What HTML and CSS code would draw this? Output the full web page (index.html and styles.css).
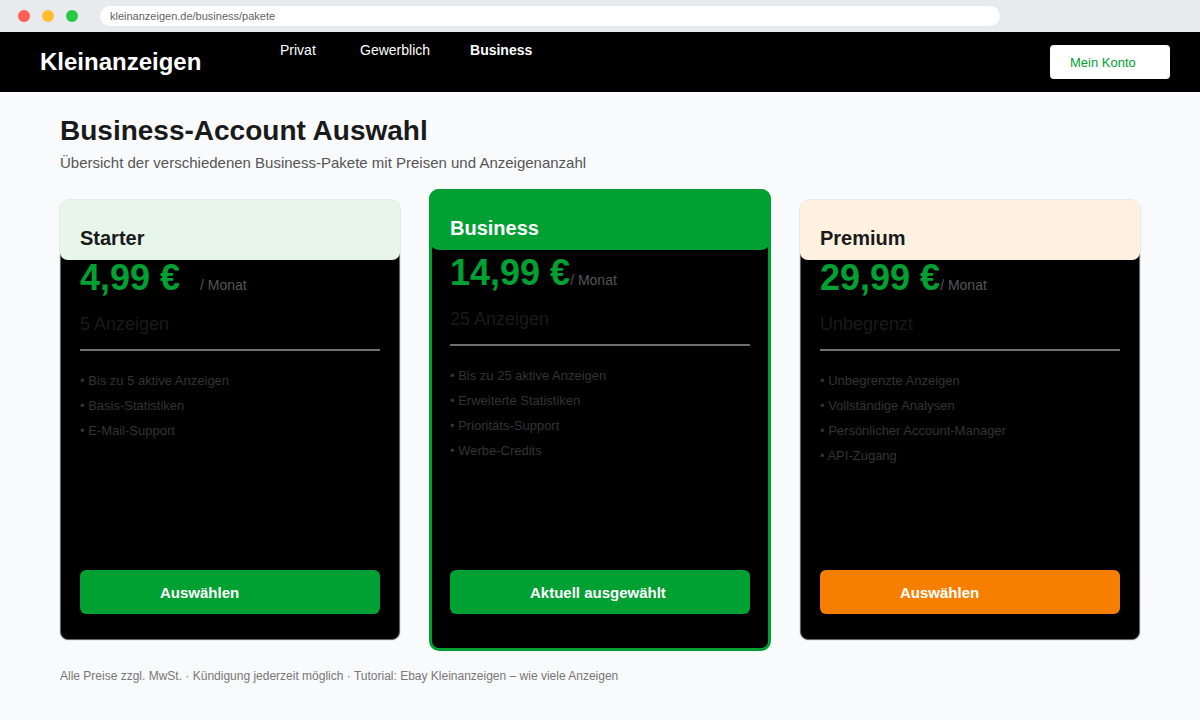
FILE: index.html
```html
<!DOCTYPE html>
<html lang="de">
<head>
<meta charset="utf-8">
<meta name="viewport" content="width=device-width, initial-scale=1">
<title>Business-Account Auswahl</title>
<link rel="stylesheet" href="styles.css">
</head>
<body>
<div class="browser">
  <span class="dot dot-red"></span>
  <span class="dot dot-yellow"></span>
  <span class="dot dot-green"></span>
  <input class="address" type="text" aria-label="Adresse" value="kleinanzeigen.de/business/pakete">
</div>
<header class="site-header">
  <div class="brand">Kleinanzeigen</div>
  <nav class="nav">
    <a href="#">Privat</a>
    <a href="#">Gewerblich</a>
    <a class="active" href="#">Business</a>
  </nav>
  <button class="account" type="button">Mein Konto</button>
</header>
<main class="page">
  <h1 class="title">Business-Account Auswahl</h1>
  <p class="subtitle">Übersicht der verschiedenen Business-Pakete mit Preisen und Anzeigenanzahl</p>
  <div class="plans">
    <section class="card">
      <h2 class="card-head starter">Starter</h2>
      <div class="card-body">
        <div class="price-row"><span class="price">4,99 €</span><span class="month">/ Monat</span></div>
        <p class="quota">5 Anzeigen</p>
        <hr class="rule">
        <ul class="features">
          <li>• Bis zu 5 aktive Anzeigen</li>
          <li>• Basis-Statistiken</li>
          <li>• E-Mail-Support</li>
        </ul>
        <button class="select" type="button">Auswählen</button>
      </div>
    </section>
    <section class="card featured">
      <h2 class="card-head business">Business</h2>
      <div class="card-body">
        <div class="price-row"><span class="price">14,99 €</span><span class="month">/ Monat</span></div>
        <p class="quota">25 Anzeigen</p>
        <hr class="rule">
        <ul class="features">
          <li>• Bis zu 25 aktive Anzeigen</li>
          <li>• Erweiterte Statistiken</li>
          <li>• Prioritäts-Support</li>
          <li>• Werbe-Credits</li>
        </ul>
        <button class="select" type="button">Aktuell ausgewählt</button>
      </div>
    </section>
    <section class="card">
      <h2 class="card-head premium">Premium</h2>
      <div class="card-body">
        <div class="price-row"><span class="price">29,99 €</span><span class="month">/ Monat</span></div>
        <p class="quota">Unbegrenzt</p>
        <hr class="rule">
        <ul class="features">
          <li>• Unbegrenzte Anzeigen</li>
          <li>• Vollständige Analysen</li>
          <li>• Persönlicher Account-Manager</li>
          <li>• API-Zugang</li>
        </ul>
        <button class="select orange" type="button">Auswählen</button>
      </div>
    </section>
  </div>
  <footer class="note">Alle Preise zzgl. MwSt. · Kündigung jederzeit möglich · Tutorial: Ebay Kleinanzeigen – wie viele Anzeigen</footer>
</main>
</body>
</html>
```
FILE: styles.css
```css
* {
  box-sizing: border-box;
}

body {
  margin: 0;
  background: #f8fafc;
  color: #1a1a1a;
  font-family: "Liberation Sans", Arial, sans-serif;
}

h1, h2, p, ul {
  margin: 0;
  padding: 0;
}

button, input {
  font-family: inherit;
  border: 0;
}

.browser {
  display: flex;
  align-items: center;
  gap: 12px;
  height: 32px;
  padding: 0 200px 0 18px;
  background: #e8eaed;
}

.dot {
  width: 12px;
  height: 12px;
  border-radius: 50%;
}

.dot-red { background: #ff5f57; }
.dot-yellow { background: #ffbd2e; }
.dot-green { background: #28ca42; }

.address {
  flex: 1;
  height: 20px;
  margin-left: 10px;
  padding: 0 10px;
  border-radius: 10px;
  background: #fff;
  color: #5f6368;
  font-size: 11px;
}

.site-header {
  display: flex;
  align-items: center;
  gap: 40px;
  height: 60px;
  padding: 0 30px 0 40px;
  background: #000;
  color: #fff;
}

.brand {
  width: 200px;
  font-size: 24px;
  font-weight: bold;
  line-height: 28px;
}

.nav {
  display: flex;
  align-self: flex-start;
  flex: 1;
  gap: 40px;
  padding-top: 10px;
  font-size: 14px;
  line-height: 16px;
}

.nav a {
  min-width: 40px;
  color: #fff;
  text-decoration: none;
}

.nav .active {
  font-weight: bold;
}

.account {
  width: 120px;
  height: 34px;
  padding: 0 20px;
  border-radius: 4px;
  background: #fff;
  color: #00a033;
  font-size: 13px;
  text-align: left;
}

.page {
  padding: 23px 60px;
}

.title {
  font-size: 28px;
  line-height: 32px;
}

.subtitle {
  margin-top: 7px;
  color: #555;
  font-size: 15px;
  line-height: 18px;
}

.plans {
  display: grid;
  grid-template-columns: repeat(3, 1fr);
  gap: 30px;
  margin-top: 28px;
}

.card {
  display: flex;
  flex-direction: column;
  min-height: 440px;
  border: 1px solid #666;
  border-radius: 10px 10px 8px 8px;
  background: #000;
  box-shadow: 0 0 0 1px #e8e9ec;
}

.card-head {
  margin: -1px -1px 0;
  padding: 26px 20px 10px;
  border-radius: 8px;
  font-size: 20px;
  line-height: 24px;
}

.starter { background: #e8f5e9; }
.premium { background: #fff1e0; }

.business {
  background: #00a033;
  color: #fff;
}

.card-body {
  display: flex;
  flex: 1;
  flex-direction: column;
  padding: 0 19px 25px;
}

.featured {
  margin: -11px -1px;
  border: 3px solid #00a033;
  border-radius: 10px;
  box-shadow: none;
}

.featured .card-head {
  margin: -3px -3px 0;
  padding: 27px 21px 10px;
  border-radius: 10px;
}

.featured .card-body {
  padding: 5px 18px 34px;
}

.price-row {
  display: flex;
  align-items: baseline;
  height: 36px;
  line-height: 36px;
}

.price {
  min-width: 120px;
  color: #00a033;
  font-size: 36px;
  font-weight: bold;
}

.month {
  color: #555;
  font-size: 14px;
}

.quota {
  margin-top: 16px;
  font-size: 18px;
  line-height: 24px;
}

.rule {
  width: 100%;
  height: 2px;
  margin: 13px 0 17px;
  border: 0;
  background: #707070;
}

.features {
  list-style: none;
  color: #333;
  font-size: 13px;
  line-height: 25px;
}

.select {
  height: 44px;
  margin-top: auto;
  padding: 0 80px;
  border-radius: 6px;
  background: #00a033;
  color: #fff;
  font-size: 15px;
  font-weight: bold;
  text-align: left;
}

.orange {
  background: #f77f00;
}

.note {
  margin-top: 28px;
  color: #777;
  font-size: 12px;
  line-height: 16px;
}
```
